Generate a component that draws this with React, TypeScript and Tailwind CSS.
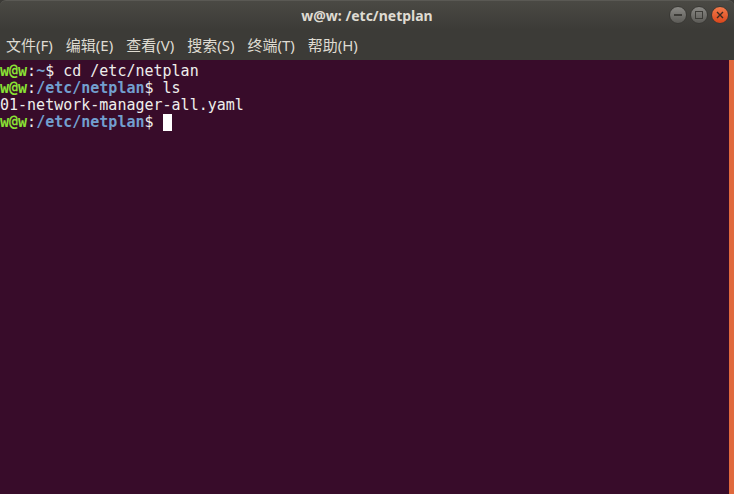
import React from 'react'

const mono = { fontFamily: '"DejaVu Sans Mono", "Liberation Mono", monospace' }

function Prompt({ path }: { path: string }) {
    return (
        <>
            <span className="font-bold text-[#8ae234]">w@w</span>
            <span>:</span>
            <span className="font-bold text-[#729fcf]">{path}</span>
            <span>$ </span>
        </>
    )
}

export default function App() {
    const menus = ['文件(F)', '编辑(E)', '查看(V)', '搜索(S)', '终端(T)', '帮助(H)']
    return (
        <div className="w-[734px] h-[494px] flex flex-col bg-[#3c3b37] overflow-hidden">
            <div className="relative h-[30px] shrink-0 flex items-center justify-center rounded-t-[6px] bg-gradient-to-b from-[#4a4944] to-[#3c3b37] border-t border-[#5a5954]">
                <span className="text-[14px] font-bold text-[#dfdbd2]" style={{ fontFamily: '"Noto Sans", "DejaVu Sans", sans-serif' }}>w@w: /etc/netplan</span>
                <div className="absolute right-[5px] top-[5px] flex gap-[3px]">
                    <div className="w-[18px] h-[18px] rounded-full bg-gradient-to-b from-[#8a8985] to-[#5c5b57] border border-[#3a3935] flex items-center justify-center">
                        <div className="w-[8px] h-[1.5px] bg-[#3c3b37]" />
                    </div>
                    <div className="w-[18px] h-[18px] rounded-full bg-gradient-to-b from-[#8a8985] to-[#5c5b57] border border-[#3a3935] flex items-center justify-center">
                        <div className="w-[8px] h-[8px] border border-[#3c3b37]" />
                    </div>
                    <div className="w-[18px] h-[18px] rounded-full bg-gradient-to-b from-[#f37a4a] to-[#d9461a] border border-[#3a3935] flex items-center justify-center">
                        <svg width="8" height="8" viewBox="0 0 8 8"><path d="M1 1L7 7M7 1L1 7" stroke="#3c2a20" strokeWidth="1.4" /></svg>
                    </div>
                </div>
            </div>
            <div className="h-[30px] shrink-0 flex items-center gap-[13px] pl-[6px] text-[15px] text-[#dfdbd2]" style={{ fontFamily: '"Noto Sans", "Noto Sans CJK SC", sans-serif' }}>
                {menus.map((m) => (
                    <span key={m}>{m}</span>
                ))}
            </div>
            <div className="flex-1 flex bg-[#380c2a]">
                <div className="flex-1 pt-[3px] text-[15px] leading-[17px] text-[#eeeeec] whitespace-pre" style={mono}>
                    <div><Prompt path="~" />cd /etc/netplan</div>
                    <div><Prompt path="/etc/netplan" />ls</div>
                    <div>01-network-manager-all.yaml</div>
                    <div className="flex items-center"><Prompt path="/etc/netplan" /><span className="inline-block w-[9px] h-[17px] bg-[#ffffff]" /></div>
                </div>
                <div className="w-[5px] bg-[#e0693d]" />
            </div>
        </div>
    )
}
